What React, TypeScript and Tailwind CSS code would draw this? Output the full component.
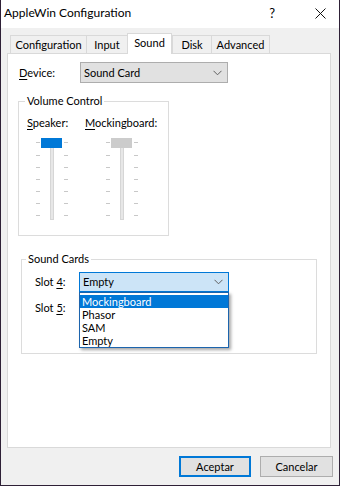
import React from "react"

const tabs = [
  { label: "Configuration", w: "w-[76px]" },
  { label: "Input", w: "w-[41px]" },
  { label: "Sound", w: "w-[45px]", active: true },
  { label: "Disk", w: "w-[39px]" },
  { label: "Advanced", w: "w-[59px]" },
]

const ticks = [5, 18, 30, 42, 54, 66, 78]

function Chevron() {
  return (
    <svg width="9" height="6" viewBox="0 0 9 6" className="shrink-0">
      <path d="M0.5 0.8 L4.5 4.8 L8.5 0.8" fill="none" stroke="#606060" strokeWidth="1" />
    </svg>
  )
}

function Slider({ thumb }: { thumb: string }) {
  return (
    <svg width="34" height="84" viewBox="0 0 34 84" className="block">
      {ticks.map(y => (
        <g key={y}>
          <rect x="1" y={y} width="4" height="1" fill="#c8c8c8" />
          <rect x="29" y={y} width="4" height="1" fill="#c8c8c8" />
        </g>
      ))}
      <rect x="15.5" y="1.5" width="3" height="81" fill="#e7e7e7" stroke="#d6d6d6" />
      <rect x="6" y="1" width="21" height="10" fill={thumb} />
    </svg>
  )
}

export default function App() {
  return (
    <div className="w-[340px] h-[486px] bg-[#f0f0f0] border-x border-b border-[#2e2036] flex flex-col text-[11px] leading-[14px] text-black font-['Lato','Noto_Sans',sans-serif]">
      {/* title bar */}
      <div className="h-[28px] bg-white flex items-center">
        <span className="pl-[3px] text-[12px] pb-[2px]">AppleWin Configuration</span>
        <span className="ml-auto mr-[40px] text-[13px] pb-[2px]">?</span>
        <svg width="11" height="11" viewBox="0 0 11 11" className="mr-[13px] mb-[2px]">
          <path d="M0.5 0.5 L10.5 10.5 M10.5 0.5 L0.5 10.5" stroke="#111" strokeWidth="1" />
        </svg>
      </div>

      {/* tabs */}
      <div className="mt-[5px] h-[20px] flex items-end pl-[9px] relative z-10">
        {tabs.map(t =>
          t.active ? (
            <div
              key={t.label}
              className={`${t.w} h-[21px] -mb-px bg-white border-x border-t border-[#d9d9d9] flex items-center justify-center pb-[3px]`}
            >
              {t.label}
            </div>
          ) : (
            <div
              key={t.label}
              className={`${t.w} h-[18px] bg-[#f0f0f0] border-l border-t border-[#d9d9d9] last:border-r flex items-center justify-center`}
            >
              {t.label}
            </div>
          )
        )}
      </div>

      {/* tab page */}
      <div className="ml-[6px] w-[324px] h-[395px] bg-white border border-[#d9d9d9] flex flex-col">
        <div className="mt-[8px] pl-[11px] flex items-center">
          <span className="w-[61px]">
            <u className="underline-offset-2">D</u>evice:
          </span>
          <div className="w-[148px] h-[21px] bg-[#e1e1e1] border border-[#adadad] flex items-center pl-[3px] pr-[5px]">
            <span className="flex-1">Sound Card</span>
            <Chevron />
          </div>
        </div>

        <fieldset className="ml-[10px] mt-[11px] w-[151px] h-[142px] border border-[#dcdcdc] pl-[8px]">
          <legend className="-ml-[2px] px-[2px] leading-[14px]">Volume Control</legend>
          <div className="mt-[8px] flex">
            <span className="w-[58px]">
              <u className="underline-offset-2">S</u>peaker:
            </span>
            <span>
              <u className="underline-offset-2">M</u>ockingboard:
            </span>
          </div>
          <div className="mt-[7px] ml-[8px] flex gap-[36px]">
            <Slider thumb="#0078d7" />
            <Slider thumb="#cccccc" />
          </div>
        </fieldset>

        <fieldset className="ml-[13px] mt-[16px] w-[296px] h-[102px] border border-[#dcdcdc] pl-[4px]">
          <legend className="px-[2px] leading-[14px]">Sound Cards</legend>
          <div className="mt-[6px] pl-[9px] h-[20px] flex items-center">
            <span className="w-[44px]">
              Slot <u className="underline-offset-2">4</u>:
            </span>
            <div className="relative">
              <div className="w-[150px] h-[20px] bg-[#cce4f7] border border-[#0078d7] flex items-center pl-[3px] pr-[5px]">
                <span className="flex-1">Empty</span>
                <Chevron />
              </div>
              <div className="absolute top-full left-0 z-20 w-[150px] bg-white border border-[#1c64ad] pt-[2px] shadow-[2px_2px_3px_rgba(0,0,0,0.35)]">
                <div className="h-[13px] leading-[13px] pl-[2px] bg-[#0078d7] text-white">Mockingboard</div>
                <div className="h-[13px] leading-[13px] pl-[2px]">Phasor</div>
                <div className="h-[13px] leading-[13px] pl-[2px]">SAM</div>
                <div className="h-[13px] leading-[13px] pl-[2px]">Empty</div>
              </div>
            </div>
          </div>
          <div className="mt-[6px] pl-[9px] h-[20px] flex items-center">
            <span className="w-[44px]">
              Slot <u className="underline-offset-2">5</u>:
            </span>
          </div>
        </fieldset>
      </div>

      {/* buttons */}
      <div className="mt-[8px] flex justify-end gap-[9px] pr-[6px]">
        <button className="w-[72px] h-[21px] bg-[#e1e1e1] border-2 border-[#0078d7] flex items-center justify-center">
          Aceptar
        </button>
        <button className="w-[73px] h-[21px] bg-[#e1e1e1] border border-[#adadad] flex items-center justify-center">
          Cancelar
        </button>
      </div>
    </div>
  )
}
